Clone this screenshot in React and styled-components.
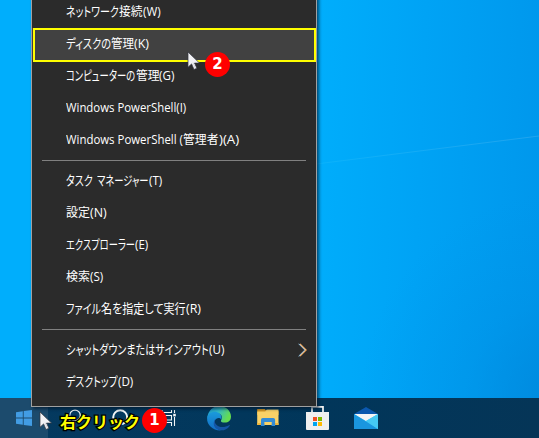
import React, { useLayoutEffect, useRef } from "react";
import styled, { createGlobalStyle } from "styled-components";

const GlobalStyle = createGlobalStyle`
  * { box-sizing: border-box; }
  body { margin: 0; overflow: hidden; }
`;

const Desktop = styled.main`
  position: relative;
  display: flex;
  flex-direction: column;
  width: 539px;
  height: 438px;
  overflow: hidden;
  background: #00adfb;
  font-family: "Open Sans", "Noto Sans CJK JP", sans-serif;
`;

const Wallpaper = styled.svg`
  display: block;
  width: 539px;
  height: 398px;
`;

const Taskbar = styled.footer`
  display: flex;
  height: 40px;
  background: linear-gradient(90deg, #053a60, #01365a 60%, #053557);
`;

const TaskSlot = styled.div`
  flex: none;
  width: ${(p) => (p.$start ? 48 : 49)}px;
  height: 40px;
  background: ${(p) => (p.$start ? "#1c4b6d" : "transparent")};
  svg { display: block; width: 100%; height: 40px; }
`;

const Menu = styled.nav`
  position: absolute;
  left: 31px;
  top: -5px;
  width: 286px;
  height: 412px;
  border: 1px solid #a0a0a0;
  background: #2b2b2b;
  box-shadow: 2px 2px 3px rgba(0, 20, 40, 0.65);
`;

const MenuRow = styled.div`
  display: flex;
  align-items: center;
  justify-content: space-between;
  height: 32px;
  padding: 0 10px 0 34px;
  background: ${(p) => (p.$active ? "#414141" : "transparent")};
`;

const Separator = styled.hr`
  height: 1px;
  margin: 4px 10px;
  border: 0;
  background: #808080;
`;

const Label = styled.span`
  display: flex;
  color: #fff;
  font-size: 12px;
  line-height: 20px;
`;

const Run = styled.span`
  flex: none;
  width: ${(p) => p.$width}px;
  height: 20px;
  white-space: pre;
`;

const Glyphs = styled.span`
  display: block;
  width: max-content;
  height: 20px;
  transform-origin: 0 50%;
  font-size: ${(p) => (p.$kana ? 13 : 12)}px;
  line-height: ${(p) => (p.$kana ? 18 : 20)}px;
  font-feature-settings: ${(p) => (p.$kana ? '"palt"' : "normal")};
`;

const Chevron = styled.svg`
  width: 9px;
  height: 14px;
  margin-right: -1px;
`;

const Highlight = styled.div`
  position: absolute;
  left: 33px;
  top: 28px;
  width: 283px;
  height: 34px;
  border: 2px solid #ffff00;
`;

const Badge = styled.span`
  position: absolute;
  left: ${(p) => p.$x}px;
  top: ${(p) => p.$y}px;
  width: 25px;
  height: 25px;
  border-radius: 50%;
  background: #ff0000;
  color: #fff;
  text-align: center;
  font: bold 15px/25px "DejaVu Sans", sans-serif;
`;

const Pointer = styled.svg`
  position: absolute;
  left: ${(p) => p.$x}px;
  top: ${(p) => p.$y}px;
  width: 14px;
  height: 20px;
`;

const Caption = styled.span`
  position: absolute;
  left: 60px;
  top: 409px;
  color: #ffff00;
  font: bold 16px/24px "Noto Sans CJK JP", sans-serif;
  -webkit-text-stroke: 2.5px #000;
  paint-order: stroke fill;
`;

function FitText({ text, width }) {
  const ref = useRef(null);
  useLayoutEffect(() => {
    const fit = () => {
      const el = ref.current;
      if (el && el.offsetWidth) el.style.transform = `scaleX(${width / el.offsetWidth})`;
    };
    fit();
    document.fonts?.ready.then(fit);
  }, [text, width]);
  return (
    <Run $width={width}>
      <Glyphs ref={ref} $kana={/[\u3040-\u30ff]/.test(text)}>{text}</Glyphs>
    </Run>
  );
}

const groups = [
  [
    { runs: [["ネットワーク", 53], ["接続", 23.5], ["(W)", 17.5]] },
    { runs: [["ディスクの", 45], ["管理", 23], ["(K)", 14.5]], active: true },
    { runs: [["コンピューターの", 69.5], ["管理", 23.5], ["(G)", 15.5]] },
    { runs: [["Windows PowerShell(I)", 120.5]] },
    { runs: [["Windows PowerShell (", 117], ["管理者", 35.5], [")(A)", 20]] },
  ],
  [
    { runs: [["タスク", 27], [" ", 4], ["マネージャー", 51.5], ["(T)", 13.5]] },
    { runs: [["設定", 24], ["(N)", 16.5]] },
    { runs: [["エクスプローラー", 69], ["(E)", 13.5]] },
    { runs: [["検索", 24], ["(S)", 13.5]] },
    { runs: [["ファイル", 35], ["名を指定して実行", 85], ["(R)", 14.5]] },
  ],
  [
    { runs: [["シャットダウンまたはサインアウト", 143], ["(U)", 15.5]], submenu: true },
    { runs: [["デスクトップ", 52], ["(D)", 15.5]] },
  ],
];

function ContextMenu() {
  return (
    <Menu>
      {groups.map((rows, g) => (
        <React.Fragment key={g}>
          {g > 0 && <Separator />}
          {rows.map((row) => (
            <MenuRow key={row.runs[0][0] + row.runs.length} $active={row.active}>
              <Label>
                {row.runs.map(([text, width]) => (
                  <FitText key={text} text={text} width={width} />
                ))}
              </Label>
              {row.submenu && (
                <Chevron viewBox="0 0 9 14" fill="none">
                  <path d="M.6 .8 6.8 7 .6 13.2" stroke="#79bdf0" strokeWidth="1" />
                  <path d="M2 .8 8.2 7 2 13.2" stroke="#f3a552" strokeWidth="1.2" />
                  <path d="M1.3 .8 7.5 7 1.3 13.2" stroke="#fff" strokeWidth=".4" />
                </Chevron>
              )}
            </MenuRow>
          ))}
        </React.Fragment>
      ))}
    </Menu>
  );
}

function Cursor({ x, y }) {
  return (
    <Pointer $x={x} $y={y} viewBox="0 0 14 20">
      <path d="M1 1v15.2l3.6-3.3 2.4 5.6 2.9-1.3-2.4-5.1h5Z" fill="#f2f2f5" stroke="#30343e" strokeWidth=".7" />
      <path d="M6 11.5 8.4 17" stroke="#d5d6de" strokeWidth="1" />
    </Pointer>
  );
}

const StartIcon = () => (
  <svg viewBox="0 0 48 40" fill="#429ce3">
    <path d="M16 14.3 22.8 13.3V19.6H16ZM23.7 13.1 32 12V19.6H23.7ZM16 20.5H22.8V26.8L16 25.8ZM23.7 20.5H32V28L23.7 26.9Z" />
  </svg>
);

const SearchIcon = () => (
  <svg viewBox="0 0 49 40" fill="none" stroke="#f2f5f7" strokeWidth="1.3">
    <circle cx="27" cy="17.4" r="5.3" />
    <path d="m23 21-5.5 6" />
  </svg>
);

const CortanaIcon = () => (
  <svg viewBox="0 0 49 40" fill="none" stroke="#f2f5f7" strokeWidth="2">
    <circle cx="23.2" cy="19.3" r="7" />
  </svg>
);

const TaskViewIcon = () => (
  <svg viewBox="0 0 49 40" fill="none" stroke="#f2f5f7" strokeWidth="1.1">
    <path d="M16 12v2.5h9.5V12M16 28v-3.5h9.5V28M16 17.5h9.5v4.5H16ZM28.5 12v3M28.5 19V28" />
    <path d="M27.2 15.8h2.6v2.6h-2.6Z" fill="#f2f5f7" stroke="none" />
  </svg>
);

const EdgeIcon = () => (
  <svg viewBox="0 0 49 40">
    <defs>
      <linearGradient id="edgeTop" x1="0" y1="0" x2="1" y2=".4">
        <stop stopColor="#168fca" />
        <stop offset=".5" stopColor="#32b9c8" />
        <stop offset="1" stopColor="#64dc51" />
      </linearGradient>
      <linearGradient id="edgeSide" x1="0" y1="0" x2="0" y2="1">
        <stop stopColor="#1b9bdc" />
        <stop offset="1" stopColor="#126bc4" />
      </linearGradient>
    </defs>
    <path d="M12.2 20.5C12.7 12.8 18 8 24.4 8 31.4 8.1 36 13.3 36 18.5c0 4-2.7 6-6.1 6-3.2 0-4.4-1.1-3.9-2.1 2.5-3.5-.1-7.3-4.6-7.3-4.6 0-7.8 2.9-9.2 5.4Z" fill="url(#edgeTop)" />
    <path d="M12.1 20.3c.6-4.5 5-7 9.2-6.4 4.3.6 6 4.8 5 7.5-2.2-2.7-5.4-1-6.4 1.2-2.2 5.3 1.4 8.6 6.1 9.9-7.7.5-14.3-5.3-13.9-12.2Z" fill="url(#edgeSide)" />
    <path d="M20.7 20.3c-2.4 3.6.3 8 5 8.6 3 .4 6-.4 8.3-1.7.6-.3 1 .1.6.7-2.1 3-5.2 4.6-8.8 4.4-5.8-.5-9.7-6-5.1-12Z" fill="#1556a5" />
  </svg>
);

const FolderIcon = () => (
  <svg viewBox="0 0 49 40">
    <path d="M13.2 11h7.6l1.7 2H34.5v4H13.2Z" fill="#dc9c24" />
    <path d="M13.2 13.5h8l1.5-2H34.5V27H13.2Z" fill="#f9d267" />
    <path d="M13.2 25h21.3v2H13.2Z" fill="#eeb63c" />
    <path d="M17 28v-6.2q0-1.8 1.8-1.8h10.5q1.8 0 1.8 1.8V28h-3.6v-4h-6.9v4Z" fill="#338cd5" />
    <path d="M20.6 24h6.9v3h-6.9Z" fill="#f9d267" />
  </svg>
);

const StoreIcon = () => (
  <svg viewBox="0 0 49 40">
    <path d="M19 15V8.8h11V15" fill="none" stroke="#f4f4f4" strokeWidth="1.7" />
    <path d="M13 14h23v17q0 1-1 1H14q-1 0-1-1Z" fill="#efefef" />
    <path d="M20 19h4v4h-4Z" fill="#f25022" />
    <path d="M25 19h4v4h-4Z" fill="#7fba00" />
    <path d="M20 24h4v4h-4Z" fill="#00a4ef" />
    <path d="M25 24h4v4h-4Z" fill="#ffb900" />
  </svg>
);

const MailIcon = () => (
  <svg viewBox="0 0 49 40">
    <path d="m12 16 12-7 12 7v8H12Z" fill="#0b58ae" />
    <path d="M13 16h22v8H13Z" fill="#f5f5f5" />
    <path d="m12 16 12 7 12-7v15H12Z" fill="#38bff2" />
    <path d="m12 16 24 15H12Z" fill="#1a96df" />
    <path d="m24 23 12-7v15Z" fill="#45c9f3" />
  </svg>
);

const icons = [StartIcon, SearchIcon, CortanaIcon, TaskViewIcon, EdgeIcon, FolderIcon, StoreIcon, MailIcon];

export default function App() {
  return (
    <>
      <GlobalStyle />
      <Desktop>
        <Wallpaper viewBox="0 0 539 398">
          <defs>
            <linearGradient id="sky" gradientUnits="userSpaceOnUse" x1="310" y1="150" x2="555" y2="160">
              <stop stopColor="#00aefc" />
              <stop offset=".45" stopColor="#00a3f5" />
              <stop offset="1" stopColor="#0096eb" />
            </linearGradient>
            <radialGradient id="corner" gradientUnits="userSpaceOnUse" cx="570" cy="400" r="210">
              <stop stopColor="#0086da" stopOpacity=".9" />
              <stop offset=".5" stopColor="#008ce0" stopOpacity=".3" />
              <stop offset="1" stopColor="#0090e4" stopOpacity="0" />
            </radialGradient>
            <linearGradient id="beam" x1="0" x2="1">
              <stop stopColor="#13b7fb" />
              <stop offset="1" stopColor="#3badee" />
            </linearGradient>
          </defs>
          <path d="M0 0h539v398H0Z" fill="url(#sky)" />
          <path d="M0 0h539v398H0Z" fill="url(#corner)" />
          <path d="M316 164 539 136" fill="none" stroke="url(#beam)" strokeWidth="1" opacity=".55" />
        </Wallpaper>
        <Taskbar>
          {icons.map((Icon, i) => (
            <TaskSlot key={i} $start={i === 0}><Icon /></TaskSlot>
          ))}
        </Taskbar>
        <ContextMenu />
        <Highlight />
        <Cursor x={187} y={51} />
        <Badge $x={205} $y={52}>2</Badge>
        <Cursor x={39} y={411} />
        <Caption>右クリック</Caption>
        <Badge $x={142} $y={408}>1</Badge>
      </Desktop>
    </>
  );
}
